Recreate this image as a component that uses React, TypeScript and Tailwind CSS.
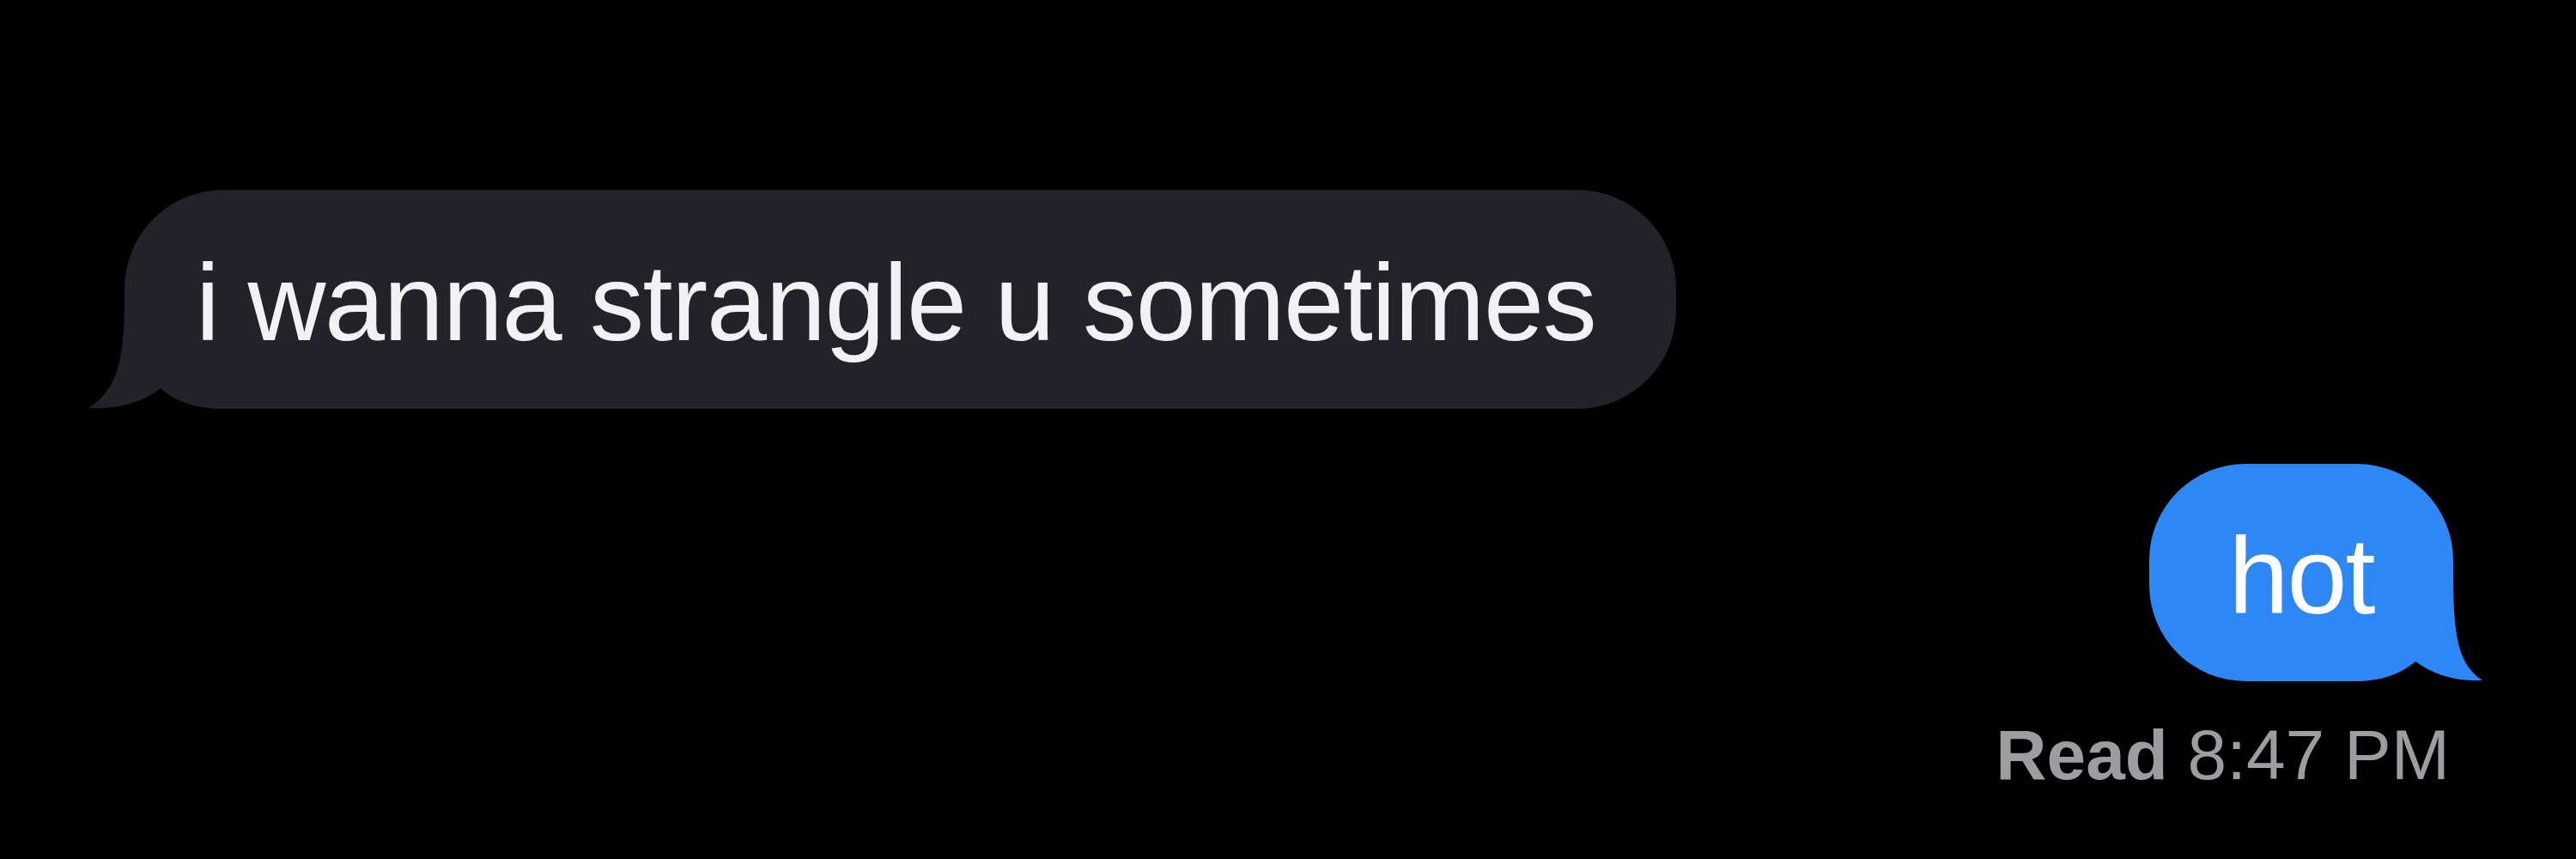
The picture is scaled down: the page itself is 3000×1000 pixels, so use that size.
import React from 'react';

// tail shape drawn in its own box, overlapping the bubble's bottom corner
function Tail({ color, flip }: { color: string; flip?: boolean }) {
  return (
    <svg
      viewBox="0 0 200 130"
      className={
        flip
          ? 'absolute right-[-60px] bottom-0 w-[200px] h-[130px] -scale-x-100'
          : 'absolute left-[-60px] bottom-0 w-[200px] h-[130px]'
      }
    >
      <path
        d={
          flip
            ? 'M60 0 C60 72 56 110 26 129 C56 131 84 122 104 107 C120 121 142 130 175 130 L200 130 L200 0 Z'
            : 'M60 0 C60 72 52 108 18 129 C52 131 82 122 102 106 C118 120 140 130 175 130 L200 130 L200 0 Z'
        }
        fill={color}
      />
    </svg>
  );
}

export default function App() {
  return (
    <div className="w-[3000px] h-[1000px] bg-black flex flex-col pt-[221px] pl-[145px] pr-[143px] font-['Liberation_Sans',Arial,sans-serif] overflow-hidden">
      {/* incoming */}
      <div className="relative self-start w-[1807px] h-[255px] rounded-[115px] bg-[#222228]">
        <Tail color="#222228" />
        <p className="relative pl-[83px] pt-[69px] text-[126px] leading-none tracking-[-1.3px] text-[#f2f2f4] whitespace-nowrap">
          i wanna strangle u sometimes
        </p>
      </div>

      {/* outgoing */}
      <div className="relative self-end mt-[64px] w-[354px] h-[253px] rounded-[112px] bg-[#2d87f4]">
        <Tail color="#2d87f4" flip />
        <p className="relative pt-[68px] text-center text-[126px] leading-none tracking-[-2px] text-white">
          hot
        </p>
      </div>

      <div className="self-end mt-[45px] pr-[4px] text-[82px] leading-none text-[#9c9ca1] whitespace-nowrap">
        <span className="font-bold">Read</span> 8:47 PM
      </div>
    </div>
  );
}
